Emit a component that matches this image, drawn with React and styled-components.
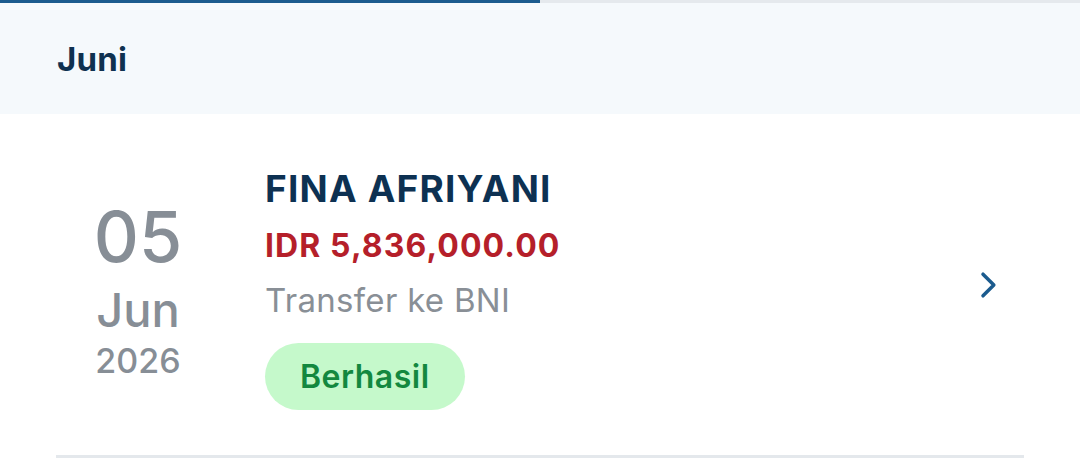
import styled, { createGlobalStyle } from "styled-components";

const GlobalStyle = createGlobalStyle`
    html, body {
        margin: 0;
        padding: 0;
        background: #ffffff;
        font-family: Inter, "Noto Sans", sans-serif;
    }
`;

const transaction = {
    day: "05",
    month: "Jun",
    year: "2026",
    name: "FINA AFRIYANI",
    amount: "IDR 5,836,000.00",
    description: "Transfer ke BNI",
    status: "Berhasil",
};

export default function App() {
    const progress = 50;

    return (
        <Page>
            <GlobalStyle />
            <ProgressTrack>
                <ProgressFill style={{ width: `${progress}%` }} />
            </ProgressTrack>
            <MonthHeader>
                <MonthTitle>Juni</MonthTitle>
            </MonthHeader>
            <TransactionRow>
                <DateColumn>
                    <Day>{transaction.day}</Day>
                    <Month>{transaction.month}</Month>
                    <Year>{transaction.year}</Year>
                </DateColumn>
                <Details>
                    <Name>{transaction.name}</Name>
                    <Amount>{transaction.amount}</Amount>
                    <Description>{transaction.description}</Description>
                    <StatusBadge>{transaction.status}</StatusBadge>
                </Details>
                <Chevron viewBox="0 0 24 24" aria-hidden="true">
                    <path d="M9 5.5 L15.5 12 L9 18.5" />
                </Chevron>
            </TransactionRow>
            <Divider />
        </Page>
    );
}

const Page = styled.div`
    width: 1080px;
    height: 462px;
    overflow: hidden;
    background: #ffffff;
`;

const ProgressTrack = styled.div`
    height: 3px;
    background-color: #e5e9ed;
`;

const ProgressFill = styled.div`
    height: 100%;
    background-color: #1b5b8e;
`;

const MonthHeader = styled.div`
    height: 111px;
    display: flex;
    align-items: center;
    padding-left: 57px;
    background-color: #f5f9fc;
`;

const MonthTitle = styled.h2`
    margin: 0;
    font-size: 33px;
    font-weight: 700;
    color: #0f3150;
    letter-spacing: 0.2px;
`;

const TransactionRow = styled.div`
    height: 341px;
    display: flex;
    align-items: center;
    padding: 0 56px;
    box-sizing: border-box;
`;

const DateColumn = styled.div`
    width: 164px;
    display: flex;
    flex-direction: column;
    align-items: center;
    color: #878e96;
    font-weight: 500;
    margin-top: 6px;
`;

const Day = styled.span`
    font-size: 70px;
    line-height: 76px;
`;

const Month = styled.span`
    font-size: 47px;
    line-height: 69px;
`;

const Year = styled.span`
    font-size: 34px;
    line-height: 33px;
`;

const Details = styled.div`
    flex: 1;
    display: flex;
    flex-direction: column;
    align-items: flex-start;
    margin-left: 45px;
    margin-top: 6px;
`;

const Name = styled.div`
    font-size: 37px;
    line-height: 46px;
    font-weight: 700;
    color: #0d3152;
    letter-spacing: 1.2px;
`;

const Amount = styled.div`
    font-size: 32px;
    line-height: 40px;
    font-weight: 700;
    color: #b51f2a;
    letter-spacing: 1.1px;
    margin-top: 14px;
`;

const Description = styled.div`
    font-size: 33px;
    line-height: 40px;
    font-weight: 400;
    color: #898f96;
    letter-spacing: 0.3px;
    margin-top: 14px;
`;

const StatusBadge = styled.div`
    margin-top: 23px;
    height: 67px;
    padding: 0 35px;
    display: flex;
    align-items: center;
    border-radius: 34px;
    background-color: #c5f9cb;
    color: #13883f;
    font-size: 32px;
    font-weight: 600;
    letter-spacing: 0.5px;
`;

const Chevron = styled.svg`
    width: 40px;
    height: 40px;
    margin-right: 16px;
    fill: none;
    stroke: #1b5b8e;
    stroke-width: 2.1;
    stroke-linecap: round;
    stroke-linejoin: round;
`;

const Divider = styled.div`
    height: 3px;
    margin: 0 56px;
    background-color: #e4e8ec;
`;
